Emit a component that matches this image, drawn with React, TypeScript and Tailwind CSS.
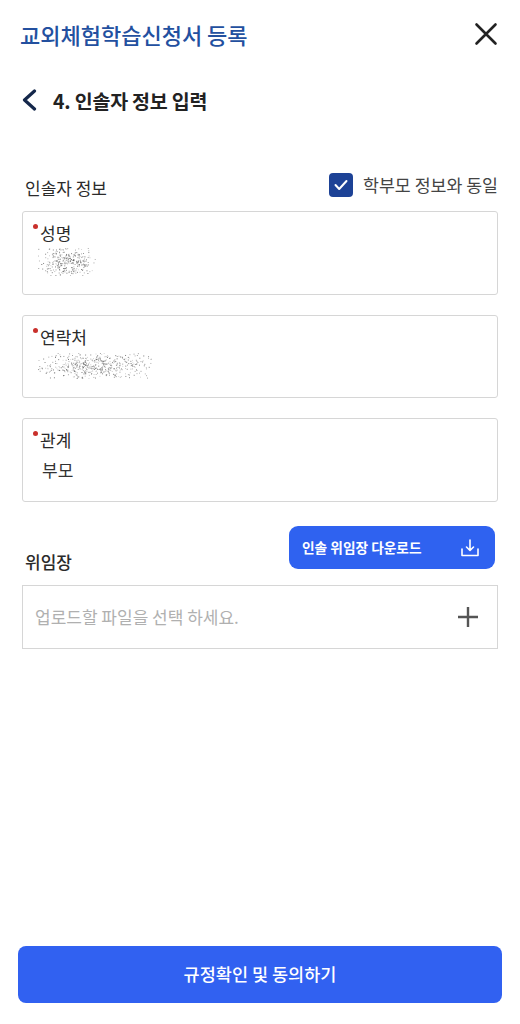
import React from "react";

function Noise({ width, height, count, seed }: { width: number; height: number; count: number; seed: number }) {
  let s = seed;
  const rnd = () => {
    s = (s * 16807) % 2147483647;
    return s / 2147483647;
  };
  const dots: React.ReactNode[] = [];
  for (let i = 0; i < count; i++) {
    const x = ((rnd() + rnd() + rnd()) / 3) * width * 1.3 - width * 0.15;
    const y = ((rnd() + rnd() + rnd()) / 3) * height * 1.5 - height * 0.25;
    const o = 0.2 + rnd() * 0.6;
    dots.push(<rect key={i} x={x} y={y} width={0.9} height={0.9} fill="#333" opacity={o} />);
  }
  return (
    <svg width={width} height={height} viewBox={`0 0 ${width} ${height}`}>
      {dots}
    </svg>
  );
}

function Field({ label, height, children }: { label: string; height: string; children: React.ReactNode }) {
  return (
    <div className={`${height} rounded-[3px] border border-[#d6d6d6] pl-[10px] pt-[8px]`}>
      <div className="relative pl-[7px] text-[17px] leading-[26px] text-[#2b2b2b]">
        <span className="absolute left-0 top-[4px] h-[5px] w-[5px] rounded-full bg-[#c9302c]" />
        {label}
      </div>
      {children}
    </div>
  );
}

export default function App() {
  return (
    <div className="flex h-[1024px] w-[520px] flex-col overflow-hidden bg-white font-['Noto_Sans_CJK_KR','Noto_Sans',sans-serif]">
      <header className="flex h-[68px] items-center justify-between pl-[20px] pr-[22px]">
        <h1 className="text-[22px] font-medium text-[#23509f]">교외체험학습신청서 등록</h1>
        <svg width="24" height="24" viewBox="0 0 24 24" fill="none" stroke="#222" strokeWidth="2.6" strokeLinecap="round">
          <path d="M2.5 2.5 21.5 21.5M21.5 2.5 2.5 21.5" />
        </svg>
      </header>

      <div className="mt-[15px] flex h-[34px] items-center pl-[22px]">
        <svg width="15" height="22" viewBox="0 0 15 22" fill="none" stroke="#15284b" strokeWidth="3.2" strokeLinecap="round" strokeLinejoin="round">
          <path d="M12.500 2 2.500 11 12.500 20" />
        </svg>
        <h2 className="ml-[16px] pt-[2px] text-[19.500px] font-bold tracking-[-0.2px] text-[#222]">4. 인솔자 정보 입력</h2>
      </div>

      <div className="mt-[56px] flex h-[38px] items-center justify-between pl-[25px] pr-[22px]">
        <span className="pb-[8px] text-[17px] text-[#2b2b2b]">인솔자 정보</span>
        <label className="flex items-center gap-[10px] pb-[14px]">
          <span className="flex h-[24px] w-[24px] items-center justify-center rounded-[4px] bg-[#1d4296]">
            <svg width="14" height="12" viewBox="0 0 14 12" fill="none" stroke="#fff" strokeWidth="2" strokeLinecap="round" strokeLinejoin="round">
              <path d="M1.5 6 5.2 10 12.5 2" />
            </svg>
          </span>
          <span className="text-[17.300px] text-[#444]">학부모 정보와 동일</span>
        </label>
      </div>

      <div className="flex flex-col gap-[20px] px-[22px]">
        <Field label="성명" height="h-[84px]">
          <div className="pl-[5px] pt-[2px]">
            <Noise width={60} height={28} count={320} seed={12345} />
          </div>
        </Field>
        <Field label="연락처" height="h-[83px]">
          <div className="pl-[3px] pt-[3px]">
            <Noise width={116} height={26} count={500} seed={67891} />
          </div>
        </Field>
        <Field label="관계" height="h-[84px]">
          <div className="pl-[9px] pt-[4px] text-[17px] leading-[26px] text-[#333]">부모</div>
        </Field>
      </div>

      <div className="mt-[24px] flex h-[43px] justify-between pl-[25px] pr-[25px]">
        <span className="mt-[23px] text-[17px] font-medium leading-[26px] text-[#2b2b2b]">위임장</span>
        <button className="flex h-[43px] w-[206px] items-center justify-between rounded-[9px] bg-[#2f62f0] pl-[13px] pr-[16px] text-[13.700px] font-bold text-white">
          <span className="pb-[1px]">인솔 위임장 다운로드</span>
          <svg width="18" height="18" viewBox="0 0 18 18" fill="none" stroke="#fff" strokeWidth="1.6" strokeLinecap="round" strokeLinejoin="round">
            <path d="M9 1v10M5.5 8 9 11.5 12.500 8M1 10v6.500h16V10" />
          </svg>
        </button>
      </div>

      <div className="mx-[22px] mt-[16px] flex h-[64px] items-center justify-between border border-[#d6d6d6] pl-[12px] pr-[18px]">
        <span className="text-[17px] text-[#b0b0b0]">업로드할 파일을 선택 하세요.</span>
        <svg width="22" height="22" viewBox="0 0 22 22" fill="none" stroke="#555" strokeWidth="2.400">
          <path d="M11 1v20M1 11h20" />
        </svg>
      </div>

      <button className="mx-[18px] mb-[21px] mt-auto flex h-[57px] items-center justify-center rounded-[8px] bg-[#3161f1] text-[17.500px] font-medium text-white">
        규정확인 및 동의하기
      </button>
    </div>
  );
}
